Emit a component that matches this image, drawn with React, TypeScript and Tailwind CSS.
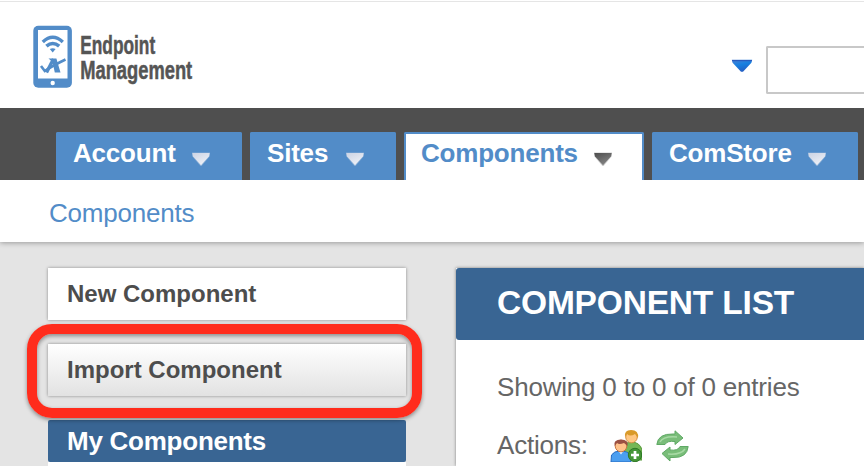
import React from 'react';

function Logo() {
  return (
    <svg width="180" height="66" viewBox="0 0 180 66" className="block">
      <rect x="0.3" y="0.7" width="38.6" height="62" rx="5" fill="#528cc8" />
      <rect x="5" y="5" width="29.5" height="48.5" fill="#fff" />
      <circle cx="19.7" cy="58" r="2.2" fill="#fff" />
      <g fill="none" stroke="#528cc8">
        <path d="M9.8 17 Q19.7 7.5 29.8 17" strokeWidth="3.4" />
        <path d="M13.4 21.2 Q19.7 15.8 26.2 21.2" strokeWidth="3.6" />
        <path d="M8 41 L11.8 46 Q19 41 32.5 34.5" strokeWidth="2.6" />
        <path d="M13.5 47.5 L20.5 34" strokeWidth="3.4" />
      </g>
      <path d="M15.5 33.5 H23.4 L27.5 47.5 H21.8 L19.5 37 Z" fill="#528cc8" />
      <path d="M16.8 24 Q19.7 22.4 22.6 24 L19.7 27.4 Z" fill="#528cc8" />
      <g
        fill="#555"
        stroke="#555"
        strokeWidth="0.5"
        fontFamily="'Liberation Sans Narrow', 'Liberation Sans', sans-serif"
        fontWeight="700"
        fontSize="25"
      >
        <text x="47.2" y="29.3" textLength="75" lengthAdjust="spacingAndGlyphs">Endpoint</text>
        <text x="47.2" y="53.8" textLength="112" lengthAdjust="spacingAndGlyphs">Management</text>
      </g>
    </svg>
  );
}

function TabArrow({ active = false }: { active?: boolean }) {
  return (
    <svg width="20" height="16" viewBox="0 0 20 16" className="mt-[18px] block shrink-0">
      <defs>
        <linearGradient id={active ? 'arrow-on' : 'arrow-off'} x1="0" y1="0" x2="0.6" y2="1">
          <stop offset="0" stopColor={active ? '#4d4d4d' : '#cbd3e4'} />
          <stop offset="1" stopColor={active ? '#858585' : '#eef1f7'} />
        </linearGradient>
      </defs>
      <path d="M1 0.6 H19 V4 L10.6 14 H9.4 L1 4 Z" fill={active ? '#777' : '#dce2ed'} opacity="0.35" />
      <path d="M1.3 1 H18.7 L17.9 4.4 L10 13.2 L2.1 4.4 Z" fill={active ? 'url(#arrow-on)' : 'url(#arrow-off)'} />
    </svg>
  );
}

function Tab({ label, size, active = false }: { label: string; size: string; active?: boolean }) {
  return (
    <div
      className={`flex h-12 shrink-0 items-start rounded-t-[2px] border-2 border-b-0 border-[#528cc8] pl-[15px] text-[26px] leading-[38px] font-bold tracking-[-0.2px] ${size} ${
        active ? 'bg-white text-[#528cc8]' : 'bg-[#528cc8] text-white'
      }`}
    >
      <span>{label}</span>
      <TabArrow active={active} />
    </div>
  );
}

function AddUsersIcon() {
  return (
    <svg width="32" height="32" viewBox="0 0 32 32" className="block">
      <path d="M14 30 V18 Q15 12 21 12 Q30 12 32 20 V30 Z" fill="#75b755" stroke="#579a3c" />
      <circle cx="21.5" cy="7" r="5.8" fill="#ffc782" stroke="#d79144" />
      <path d="M15 7 Q14 0 21 0 Q29 0 28 8 L25 4 Q20 7 17 4 Z" fill="#d99a29" />
      <path d="M1 32 L1.5 25 Q4 21 10 21 Q18 21 20 25 L21 32 Z" fill="#4c9ff0" stroke="#286bc0" />
      <path d="M8.5 21 L11 24.5 L13.5 21 Z" fill="#e6f3ff" />
      <circle cx="11" cy="16" r="5.8" fill="#ffc28a" stroke="#c97842" />
      <path d="M4.6 16 Q3 9.5 11 9.5 Q19 9.5 17.5 16 L14 13 Q9 15 7 13 Z" fill="#9b5042" />
      <circle cx="25" cy="25" r="6.7" fill="#459536" stroke="#2e7927" />
      <path d="M25 21 V29 M21 25 H29" stroke="#fff" strokeWidth="2.7" />
    </svg>
  );
}

function RefreshIcon() {
  return (
    <svg width="33" height="32" viewBox="0 0 33 32" className="block">
      <g fill="#79bd79" stroke="#5fa965" strokeWidth="1">
        <path d="M0.8 14.5 Q2 3.5 17 4 H19 V0.8 L27 8 L19 14.5 V11.5 Q11 10.5 9 14.5 Z" />
        <path d="M32.2 16.5 Q31 28 17 27.5 H14 V31 L6 23.5 L14 17 V20 Q22 21 24 16.5 Z" />
      </g>
      <path d="M4 12 Q7 6 21 7 M29 19 Q25 25 12 24" fill="none" stroke="#a8daa5" strokeWidth="1.5" />
    </svg>
  );
}

export default function App() {
  return (
    <div className="relative flex h-[466px] w-[864px] flex-col overflow-hidden bg-[#e4e4e4] font-['Liberation_Sans',Arial,sans-serif]">
      <header className="flex h-[108px] shrink-0 items-start bg-white">
        <div className="mt-px flex h-full w-full items-start border-t border-[#e5e5e5] pl-[33px]">
          <div className="mt-[23px]">
            <Logo />
          </div>
          <svg width="22" height="16" viewBox="0 0 22 16" className="mt-[57px] ml-[518px] block shrink-0">
            <defs>
              <linearGradient id="blue-arrow" x1="0" y1="0" x2="0.4" y2="1">
                <stop offset="0" stopColor="#4e80d4" />
                <stop offset="0.5" stopColor="#1680e0" />
                <stop offset="1" stopColor="#245fc4" />
              </linearGradient>
            </defs>
            <path d="M0.8 0.8 H21.2 L20.4 3.8 L12 12.8 H10 L1.6 3.8 Z" fill="url(#blue-arrow)" />
            <path d="M1 1.6 H21" stroke="#285bbd" strokeWidth="1.2" />
          </svg>
          <div className="mt-11 ml-[13px] h-12 grow rounded-l-[2px] border-2 border-r-0 border-[#c8c8c8] bg-white" />
        </div>
      </header>

      <nav className="z-20 flex h-[72px] shrink-0 items-end gap-2 bg-[#4f4f4f] pl-14">
        <Tab label="Account" size="w-[186px] gap-[15px]" />
        <Tab label="Sites" size="w-[146px] gap-[17px]" />
        <Tab label="Components" size="w-[240px] gap-[15px]" active />
        <Tab label="ComStore" size="w-[206px] gap-[15px]" />
      </nav>

      <div className="z-10 h-[62px] shrink-0 bg-white pl-[49px] text-[26px] leading-[66px] tracking-[-0.2px] text-[#528cc8] shadow-[0_1px_5px_rgba(0,0,0,0.32)]">
        Components
      </div>

      <main className="flex grow items-start gap-[50px] pt-[26px] pl-12">
        <aside className="flex w-[358px] shrink-0 flex-col text-2xl font-bold text-[#4d4d4d]">
          <div className="h-[52px] bg-white pl-[19px] leading-[52px] shadow-[0_0_3px_rgba(0,0,0,0.4)]">
            New Component
          </div>
          <div className="mt-6 h-[52px] bg-linear-to-b from-white to-[#e2e2e2] pl-[19px] leading-[52px] shadow-[0_0_3px_rgba(0,0,0,0.4)]">
            Import Component
          </div>
          <div className="mt-6 h-[42px] rounded-[2px] bg-[#396593] pl-[19px] text-[26px] leading-[43px] tracking-[-0.25px] text-white">
            My Components
          </div>
          <div className="h-2 bg-white" />
        </aside>
        <section className="h-[198px] grow bg-white shadow-[0_0_3px_rgba(0,0,0,0.45)]">
          <h1 className="h-[72px] rounded-l-[3px] bg-[#396593] pl-[41px] text-[33.5px] leading-[70px] font-bold tracking-[-0.18px] text-white">
            COMPONENT LIST
          </h1>
          <div className="h-[90px] pl-[41px] text-[26px] leading-[95px] tracking-[-0.2px] text-[#666]">
            Showing 0 to 0 of 0 entries
          </div>
          <div className="flex items-start pl-[41px] text-[26px] leading-[31px] tracking-[-0.2px] text-[#666]">
            <span className="w-[113px]">Actions:</span>
            <AddUsersIcon />
            <div className="ml-[14px]">
              <RefreshIcon />
            </div>
          </div>
        </section>
      </main>

      <div className="absolute top-[324px] left-[27px] z-20 h-[94px] w-[395px] rounded-[25px] border-10 border-[#ff2c1c] shadow-[0_2px_4px_rgba(0,0,0,0.4),inset_0_2px_4px_rgba(0,0,0,0.4)]" />
    </div>
  );
}
